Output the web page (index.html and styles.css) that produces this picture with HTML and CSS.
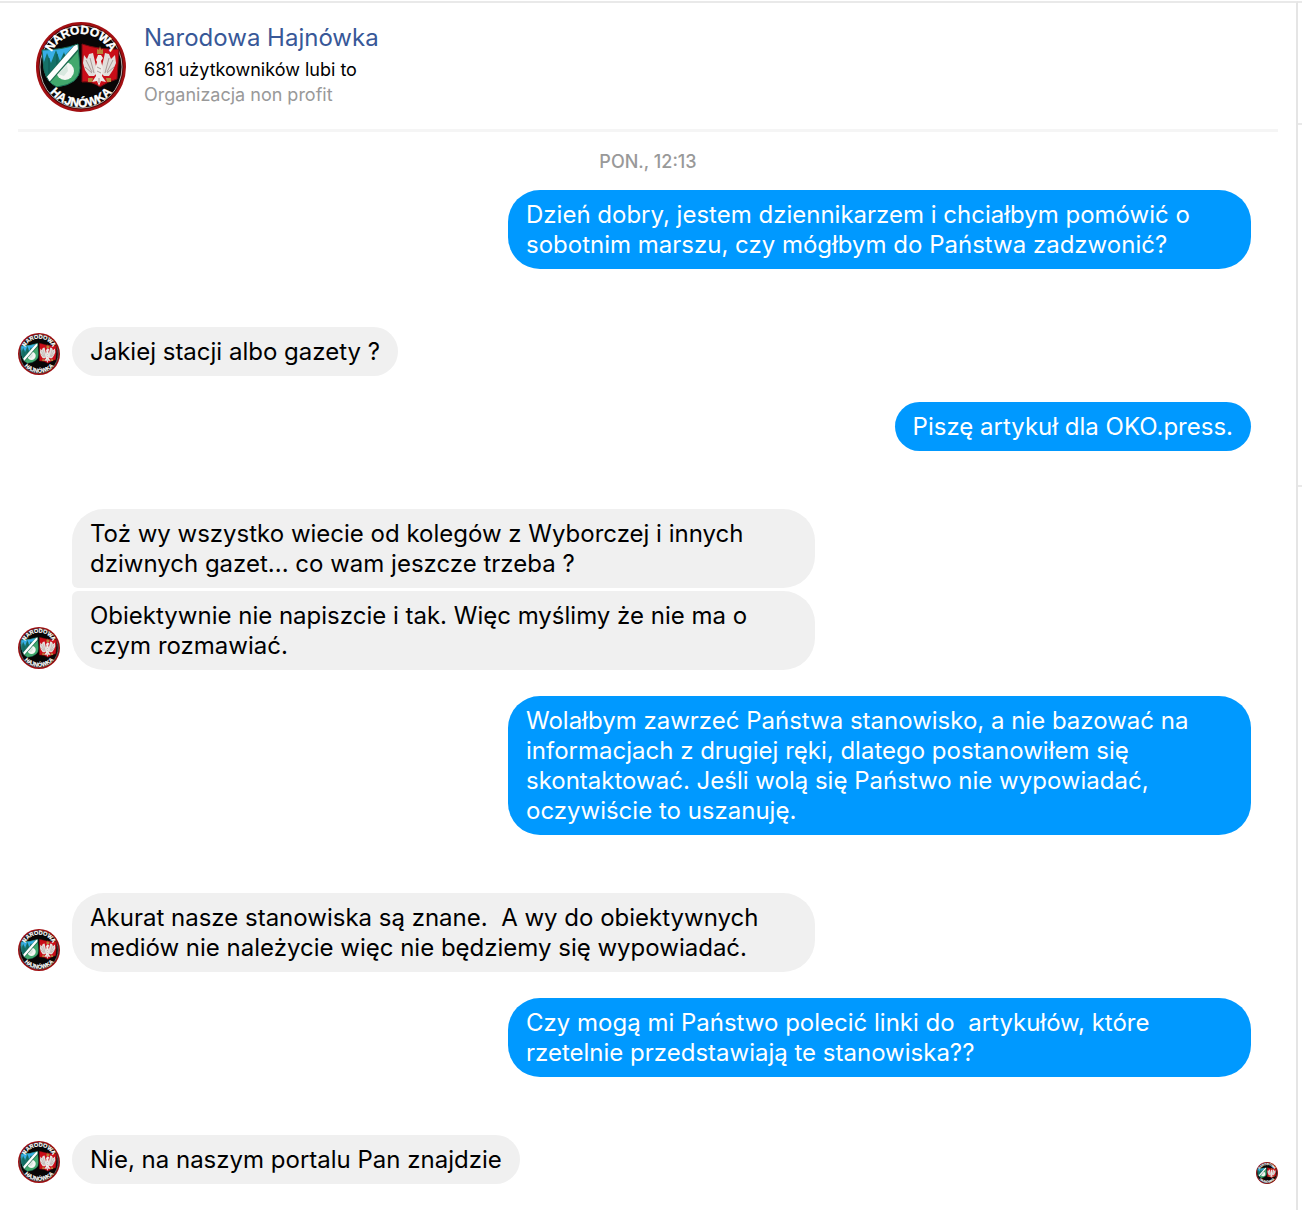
FILE: index.html
```html
<!DOCTYPE html>
<html lang="pl">
<head>
    <meta charset="UTF-8">
    <meta name="viewport" content="width=device-width, initial-scale=1.0">
    <title>Narodowa Hajnówka</title>
    <link rel="stylesheet" href="styles.css">
</head>
<body>
    <!-- page logo, reused by every avatar -->
    <svg class="hidden" aria-hidden="true">
        <defs>
            <path id="arc-top" d="M12 45 A33 33 0 0 1 78 45"/>
            <path id="arc-bottom" d="M5 45 A40 40 0 0 0 85 45"/>
            <clipPath id="shield-left">
                <path d="M6 28 Q26 28 42 22 L44 46 Q44 62 21 65 Q11 61 8 48 Z"/>
            </clipPath>
        </defs>
        <symbol id="logo" viewBox="0 0 90 90" overflow="visible">
            <circle cx="45" cy="45" r="45" fill="#a20f12"/>
            <circle cx="45" cy="45" r="42" fill="#080606" stroke="#5c0808" stroke-width="1"/>
            <circle cx="45" cy="45" r="41" fill="none" stroke="#b5aaa8" stroke-width="1"/>
            <g clip-path="url(#shield-left)">
                <path d="M4 18h44v50H4z" fill="#42a86d"/>
                <path d="M4 18h40L7 64z" fill="#38aee6"/>
                <path d="M8 62V40l3-9 4 10 5-13 4 11 4-9 3 9-20 25z" fill="#167268"/>
                <path d="M13 60V36M21 48V32M28 40V32" stroke="#0d5650" stroke-width="1"/>
                <circle cx="29" cy="49" r="9" fill="#f4f6f3"/>
                <path d="M22 52l9-9 1 6-4 5z" fill="#d8e8df"/>
                <path d="M9 61L43 23" stroke="#1d6b50" stroke-width="7"/>
                <path d="M8 62L43 22" stroke="#fff" stroke-width="5"/>
            </g>
            <path d="M6 28 Q26 28 42 22 L44 46 Q44 62 21 65 Q11 61 8 48 Z" fill="none" stroke="#176a55" stroke-width="1"/>
            <path d="M46 22 Q64 28 83 27 L81 57 Q71 60 64 65 Q56 59 46 60 Z" fill="#c90d18" stroke="#740b10" stroke-width="1"/>
            <!-- eagle: wings, body and tail -->
            <path d="M60 44 L57 31 53 32 51 37 48 33 47 41 49 48 53 54 58 54 61 51z" fill="#e2dedb"/>
            <path d="M66 44 L69 31 73 32 75 37 79 33 80 41 77 48 73 54 68 54 65 51z" fill="#e2dedb"/>
            <path d="M60 38l2-5h3l2 3-2 3 2 8-1 7 4 6-5-1-2 5-2-5-5 1 4-6-1-7 2-7z" fill="#eeebe8"/>
            <path d="M50 38l6 12M54 36l4 15M49 45l7 6M77 38l-6 12M73 36l-4 15M78 45l-7 6M61 45l4 2M61 49l4 2M63 56v5" stroke="#a99a97" stroke-width="1" fill="none"/>
            <path d="M61 32v-5l2 1 1-4 1 4 2-1v5zM52 56h5l-1 4h-4zM70 56h5v4h-4z" fill="#b78538"/>
            <g class="logo-text" text-anchor="middle">
                <text><textPath href="#arc-top" startOffset="50%">NARODOWA</textPath></text>
                <text><textPath href="#arc-bottom" startOffset="50%">HAJNÓWKA</textPath></text>
            </g>
        </symbol>
    </svg>

    <main class="chat">
        <header class="chat-header">
            <svg class="avatar-large" role="img" aria-label="Narodowa Hajnówka"><use href="#logo"/></svg>
            <div class="page-info">
                <h1><a href="#">Narodowa Hajnówka</a></h1>
                <p class="likes">681 użytkowników lubi to</p>
                <p class="category">Organizacja non profit</p>
            </div>
        </header>

        <div class="messages">
            <time class="date">PON., 12:13</time>

            <div class="group sent">
                <p class="bubble">Dzień dobry, jestem dziennikarzem i chciałbym pomówić o sobotnim marszu, czy mógłbym do Państwa zadzwonić?</p>
            </div>

            <div class="group received">
                <svg class="avatar"><use href="#logo"/></svg>
                <div class="bubbles">
                    <p class="bubble">Jakiej stacji albo gazety ?</p>
                </div>
            </div>

            <div class="group sent">
                <p class="bubble">Piszę artykuł dla OKO.press.</p>
            </div>

            <div class="group received">
                <svg class="avatar"><use href="#logo"/></svg>
                <div class="bubbles">
                    <p class="bubble">Toż wy wszystko wiecie od kolegów z Wyborczej i innych dziwnych gazet... co wam jeszcze trzeba ?</p>
                    <p class="bubble">Obiektywnie nie napiszcie i tak. Więc myślimy że nie ma o czym rozmawiać.</p>
                </div>
            </div>

            <div class="group sent">
                <p class="bubble">Wolałbym zawrzeć Państwa stanowisko, a nie bazować na informacjach z drugiej ręki, dlatego postanowiłem się skontaktować. Jeśli wolą się Państwo nie wypowiadać, oczywiście to uszanuję.</p>
            </div>

            <div class="group received">
                <svg class="avatar"><use href="#logo"/></svg>
                <div class="bubbles">
                    <p class="bubble">Akurat nasze stanowiska są znane.&nbsp; A wy do obiektywnych mediów nie należycie więc nie będziemy się wypowiadać.</p>
                </div>
            </div>

            <div class="group sent">
                <p class="bubble">Czy mogą mi Państwo polecić linki do&nbsp; artykułów, które rzetelnie przedstawiają te stanowiska??</p>
            </div>

            <div class="group received">
                <svg class="avatar"><use href="#logo"/></svg>
                <div class="bubbles">
                    <p class="bubble">Nie, na naszym portalu Pan znajdzie</p>
                </div>
                <svg class="avatar-seen"><use href="#logo"/></svg>
            </div>
        </div>
    </main>

    <aside class="side">
        <div class="side-top"></div>
        <div class="side-middle"></div>
    </aside>
</body>
</html>
```

FILE: styles.css
```css
* {
    box-sizing: border-box;
}

body {
    margin: 0;
    padding-top: 1px;
    font-family: Inter, "Liberation Sans", sans-serif;
    background-color: #fff;
    color: #000;
    display: flex;
    min-height: 100vh;
}

h1,
p {
    margin: 0;
}

svg {
    overflow: visible;
}

.hidden {
    position: absolute;
    width: 0;
    height: 0;
}

.chat {
    flex: 1;
    border-top: 2px solid #e9e9e9;
    border-right: 2px solid #e5e5e5;
    padding: 0 18px;
}

.chat-header {
    display: flex;
    gap: 18px;
    padding: 19px 18px 17px;
    border-bottom: 3px solid #f5f5f5;
}

.avatar-large {
    width: 90px;
    height: 90px;
}

.logo-text {
    font-family: "Liberation Sans Narrow", "Liberation Sans", sans-serif;
    font-size: 12px;
    font-weight: bold;
    fill: #fff;
    stroke: #fff;
    stroke-width: 0.4;
}

.page-info h1 {
    font-size: 24px;
    line-height: 32px;
    font-weight: 400;
}

.page-info a {
    color: #385898;
    text-decoration: none;
}

.page-info a:hover {
    text-decoration: underline;
}

.likes {
    font-size: 18px;
    line-height: 32px;
}

.category {
    font-size: 18px;
    line-height: 18px;
    color: #999;
}

.messages {
    display: flex;
    flex-direction: column;
    padding: 18px 0 26px;
}

.date {
    font-size: 18px;
    line-height: 24px;
    font-weight: 500;
    text-align: center;
    color: #999;
    margin-bottom: 16px;
}

.group {
    display: flex;
    align-items: flex-end;
}

.sent {
    justify-content: flex-end;
    padding-right: 27px;
    margin-bottom: 58px;
}

.received {
    gap: 12px;
    margin-bottom: 26px;
}

.received:last-child {
    margin-bottom: 0;
}

.avatar {
    width: 42px;
    height: 42px;
    margin-bottom: 1px;
    flex-shrink: 0;
}

.avatar-seen {
    width: 22px;
    height: 22px;
    margin-left: auto;
    flex-shrink: 0;
}

.bubbles {
    display: flex;
    flex-direction: column;
    align-items: flex-start;
    gap: 3px;
}

.bubble {
    max-width: 743px;
    padding: 10px 18px 9px;
    border-radius: 32px;
    font-size: 24px;
    line-height: 30px;
}

.sent .bubble {
    background: #0099ff;
    color: #fff;
}

.received .bubble {
    background: #f0f0f0;
}

.received .bubble:not(:last-child) {
    border-bottom-left-radius: 6px;
}

.received .bubble:not(:first-child) {
    border-top-left-radius: 6px;
}

.side {
    width: 4px;
    border-top: 2px solid #e9e9e9;
}

.side-top {
    height: 122px;
    border-bottom: 2px solid #e9e9e9;
}

.side-middle {
    height: 362px;
    border-bottom: 2px solid #e9e9e9;
}
```
